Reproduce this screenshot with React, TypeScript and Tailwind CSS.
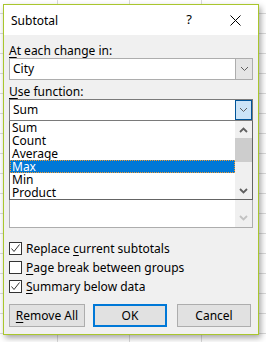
import React from "react";

const FONT = "font-['Segoe_UI','Noto_Sans',sans-serif]";

function Chevron({ up = false, bold = false, color = "#606060" }: { up?: boolean; bold?: boolean; color?: string }) {
  return (
    <svg width="9" height="6" viewBox="0 0 9 6" className="block">
      <polyline
        points={up ? "1,5 4.5,1.5 8,5" : "1,1 4.5,4.5 8,1"}
        fill="none"
        stroke={color}
        strokeWidth={bold ? 1.8 : 1}
      />
    </svg>
  );
}

function Check() {
  return (
    <svg width="11" height="11" viewBox="0 0 11 11" className="block">
      <polyline points="1.5,5.5 4,8.5 9.5,1.5" fill="none" stroke="#333" strokeWidth="1" />
    </svg>
  );
}

function Key({ children }: { children: React.ReactNode }) {
  return <span className="underline underline-offset-2">{children}</span>;
}

function CheckRow({ checked, children }: { checked: boolean; children: React.ReactNode }) {
  return (
    <div className="flex h-[19px] items-center">
      <div className="flex h-[13px] w-[13px] items-center justify-center border border-[#333] bg-white">
        {checked && <Check />}
      </div>
      <span className="ml-[4px] leading-[15px]">{children}</span>
    </div>
  );
}

const ITEMS = ["Sum", "Count", "Average", "Max", "Min", "Product"];

export default function App() {
  return (
    <div
      className={`${FONT} h-[342px] w-[266px] overflow-hidden bg-white bg-[linear-gradient(to_right,#dadada_1px,transparent_1px),linear-gradient(to_bottom,#dadada_1px,transparent_1px)] bg-[size:72px_20px] bg-[position:57px_13px] pl-[3px] pt-[4px] text-[12px] text-black`}
    >
      <div className="flex h-[331px] w-[256px] flex-col border border-[#a9c62d] bg-[#f0f0f0] shadow-[2px_3px_6px_rgba(0,0,0,0.35)]">
        {/* title bar */}
        <div className="flex h-[30px] items-center bg-white pl-[7px]">
          <span className="flex-1 leading-[15px]">Subtotal</span>
          <div className="flex h-full w-[46px] items-center justify-center text-[13px]">?</div>
          <div className="flex h-full w-[46px] items-center justify-center">
            <svg width="11" height="11" viewBox="0 0 11 11" className="block">
              <path d="M0.5 0.5 L10.5 10.5 M10.5 0.5 L0.5 10.5" stroke="#000" strokeWidth="1" />
            </svg>
          </div>
        </div>

        <div className="flex flex-col px-[5px] pt-[8px]">
          <div className="h-[15px] leading-[15px]">
            <Key>A</Key>t each change in:
          </div>
          <div className="flex h-[22px] border border-[#adadad] bg-white">
            <span className="flex-1 pl-[3px] leading-[20px]">City</span>
            <div className="flex w-[17px] items-center justify-center border-l border-[#adadad] bg-[#e5e5e5]">
              <Chevron />
            </div>
          </div>

          <div className="mt-[4px] h-[15px] leading-[15px]">
            <Key>U</Key>se function:
          </div>
          <div className="relative">
            <div className="flex h-[22px] border border-[#7a7a7a] bg-white">
              <span className="flex-1 pl-[3px] leading-[20px]">Sum</span>
              <div className="flex w-[17px] items-center justify-center border border-[#005499] bg-[#cce4f7]">
                <Chevron />
              </div>
            </div>

            {/* list box that lies under the open dropdown */}
            <div className="mt-[21px] flex h-[86px] border border-[#adadad] bg-white">
              <div className="flex-1" />
              <div className="flex w-[17px] flex-col justify-end bg-[#f0f0f0] pb-[6px]">
                <div className="flex justify-center">
                  <Chevron bold color="#c2c2c2" />
                </div>
              </div>
            </div>

            {/* open dropdown */}
            <div className="absolute left-0 right-0 top-[22px] flex border border-t-0 border-[#646464] bg-white">
              <div className="flex flex-1 flex-col">
                {ITEMS.map((it) =>
                  it === "Max" ? (
                    <div
                      key={it}
                      className="h-[13px] border border-dotted border-[#f39a2f] bg-[#0078d7] pl-[1px] leading-[11px] text-white"
                    >
                      {it}
                    </div>
                  ) : (
                    <div key={it} className="h-[13px] pl-[2px] leading-[13px]">
                      {it}
                    </div>
                  )
                )}
              </div>
              <div className="flex w-[17px] flex-col bg-[#f0f0f0]">
                <div className="flex h-[17px] items-center justify-center">
                  <Chevron up bold />
                </div>
                <div className="h-[24px] bg-[#cdcdcd]" />
                <div className="flex-1" />
                <div className="flex h-[17px] items-center justify-center">
                  <Chevron bold />
                </div>
              </div>
            </div>
          </div>

          <div className="mt-[11px] flex flex-col">
            <CheckRow checked>
              Replace <Key>c</Key>urrent subtotals
            </CheckRow>
            <CheckRow checked={false}>
              <Key>P</Key>age break between groups
            </CheckRow>
            <CheckRow checked>
              <Key>S</Key>ummary below data
            </CheckRow>
          </div>

          <div className="mt-[8px] flex">
            <button className="h-[23px] w-[76px] border border-[#adadad] bg-[#e1e1e1] leading-[21px]">
              <Key>R</Key>emove All
            </button>
            <button className="ml-[8px] h-[23px] w-[74px] border-2 border-[#0078d7] bg-[#e1e1e1] leading-[19px]">
              OK
            </button>
            <button className="ml-[10px] h-[23px] w-[74px] border border-[#adadad] bg-[#e1e1e1] leading-[21px]">
              Cancel
            </button>
          </div>
        </div>
      </div>
    </div>
  );
}
